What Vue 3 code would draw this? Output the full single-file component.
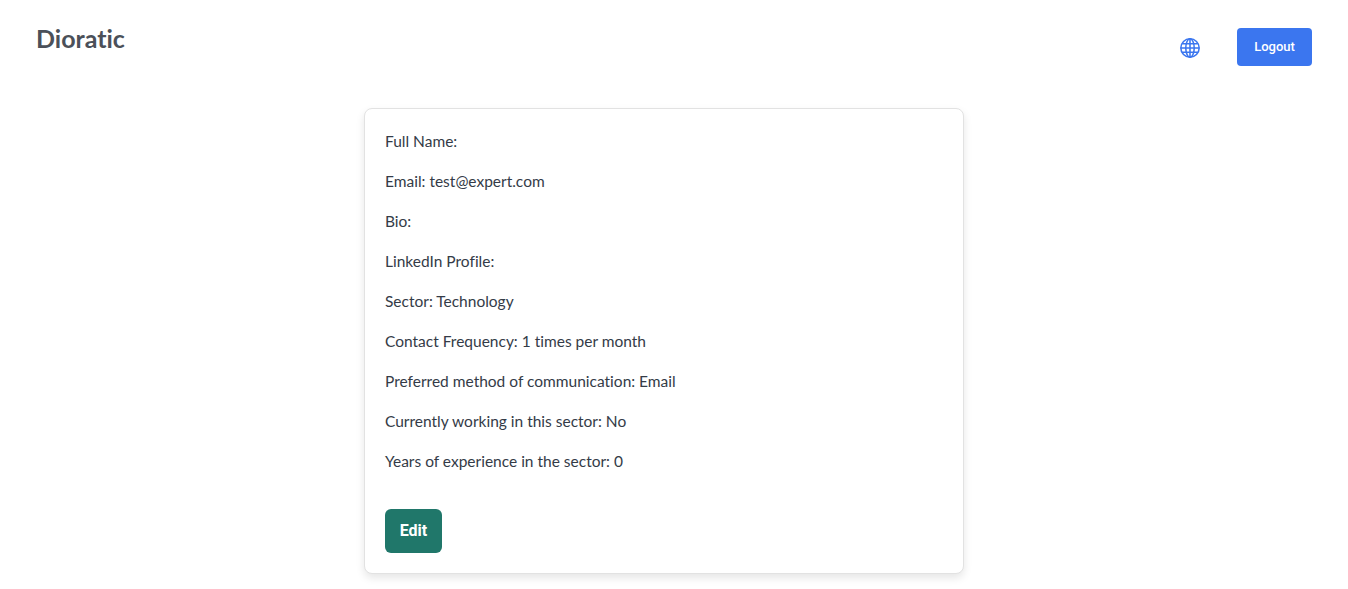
<template>
  <div class="page">
    <header class="topbar">
      <div class="logo">Dioratic</div>
      <div class="actions">
        <button class="lang-btn" type="button" aria-label="Language">
          <svg viewBox="0 0 24 24" width="22" height="22" fill="none" stroke="#3b76ef" stroke-width="1.7">
            <circle cx="12" cy="12" r="10" />
            <ellipse cx="12" cy="12" rx="4.6" ry="10" />
            <path d="M12 2v20M2 12h20M3.6 7.4h16.8M3.6 16.6h16.8" />
          </svg>
        </button>
        <button class="logout" type="button">Logout</button>
      </div>
    </header>

    <main class="content">
      <section class="card">
        <p v-for="row in rows" :key="row" class="row">{{ row }}</p>
        <button class="edit" type="button">Edit</button>
      </section>
    </main>
  </div>
</template>

<script setup>
const rows = [
  'Full Name:',
  'Email: test@expert.com',
  'Bio:',
  'LinkedIn Profile:',
  'Sector: Technology',
  'Contact Frequency: 1 times per month',
  'Preferred method of communication: Email',
  'Currently working in this sector: No',
  'Years of experience in the sector: 0'
]
</script>

<style>
body {
  background: #fff;
}
</style>

<style scoped>
.page {
  height: 589px;
  overflow: hidden;
  background: #fff;
  font-family: Lato, "Noto Sans", sans-serif;
  font-variant-ligatures: none;
}

.topbar {
  display: flex;
  justify-content: space-between;
  align-items: flex-start;
  height: 108px;
  padding: 0 36px 0 36px;
  box-sizing: border-box;
}

.logo {
  margin-top: 22px;
  font-family: Lato, sans-serif;
  font-size: 25px;
  line-height: 32px;
  font-weight: 700;
  color: #4b5059;
}

.actions {
  display: flex;
  align-items: center;
  gap: 36px;
  margin-top: 28px;
}

.lang-btn {
  display: flex;
  width: 22px;
  height: 22px;
  margin-top: 2px;
  padding: 0;
  border: 0;
  background: none;
}

.logout {
  width: 75px;
  height: 38px;
  padding: 0 0 2px;
  border: 0;
  border-radius: 4px;
  background: #3b76ef;
  color: #fff;
  font-family: Roboto, sans-serif;
  font-size: 13px;
  font-weight: 500;
}

.content {
  display: flex;
  justify-content: center;
  padding-right: 20px;
}

.card {
  width: 600px;
  box-sizing: border-box;
  padding: 20px;
  background: #fff;
  border: 1px solid #e2e2e2;
  border-radius: 8px;
  box-shadow: 0 4px 8px rgba(0, 0, 0, 0.1);
}

.row {
  margin: 0 0 16px;
  font-size: 15.5px;
  line-height: 24px;
  color: #343b47;
}

.edit {
  display: block;
  width: 57px;
  height: 44px;
  margin-top: 36px;
  padding: 0 0 1px;
  border: 0;
  border-radius: 6px;
  background: #20776a;
  color: #fff;
  font-family: Roboto, sans-serif;
  font-size: 16px;
  font-weight: 700;
}
</style>
